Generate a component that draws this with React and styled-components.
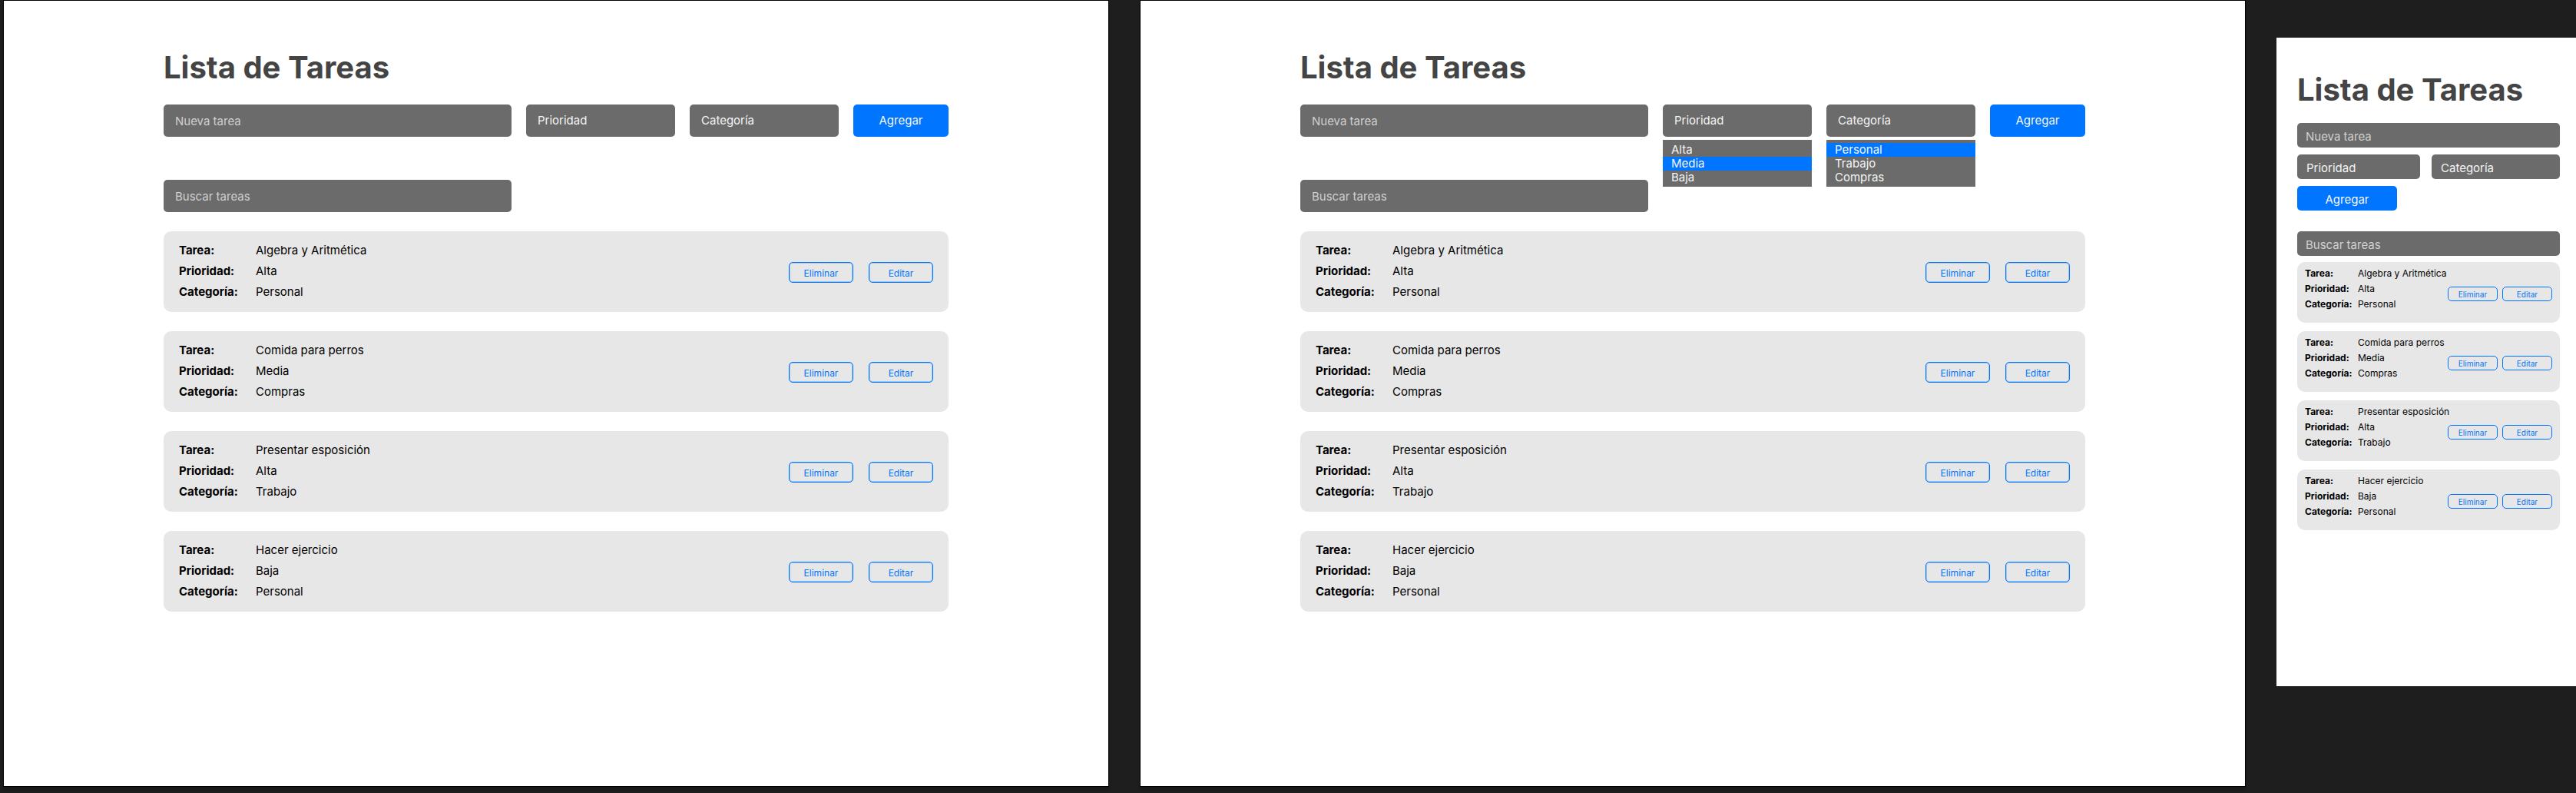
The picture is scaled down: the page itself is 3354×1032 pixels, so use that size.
import React from "react";
import styled, { createGlobalStyle, css } from "styled-components";

const GlobalStyle = createGlobalStyle`
  *, *::before, *::after { box-sizing: border-box; }
  body {
    margin: 0;
    background: #1e1e1e;
    font-family: Inter, "Liberation Sans", sans-serif;
  }
  button, input, select { font: inherit; }
`;

const Board = styled.main`
  display: grid;
  grid-template-columns: minmax(0, 1440fr) minmax(0, 1440fr) minmax(0, 390fr);
  column-gap: 40px;
  align-items: start;
  min-height: 100vh;
  padding-left: 4px;
`;

const Screen = styled.section`
  background: #fff;
  color: #000;
  ${(p) =>
    p.$compact
      ? css`
          min-height: 844px;
          margin-top: 49px;
          padding: 44px 21px 0 27px;
        `
      : css`
          min-height: 1024px;
          border: 1px solid #000;
          padding: 63px 208px 0;
          box-shadow: 0 4px 4px rgba(0, 0, 0, 0.25);
        `}
`;

const Title = styled.h1`
  margin: 0;
  color: #444;
  font-size: 40px;
  font-weight: 700;
  line-height: 48px;
`;

const Form = styled.form`
  display: grid;
  font-size: 15px;
  line-height: 18px;
  ${(p) =>
    p.$compact
      ? css`
          grid-template-columns: minmax(0, 160fr) minmax(0, 167fr);
          gap: 9px 15px;
          margin-top: 19px;
        `
      : css`
          grid-template-columns: minmax(0, 453fr) minmax(0, 194fr) minmax(0, 194fr) 124px;
          gap: 19px;
          margin-top: 24px;
        `}
`;

const field = css`
  display: block;
  width: 100%;
  height: ${(p) => (p.$compact ? 32 : 42)}px;
  margin: 0;
  border: 0;
  border-radius: 5px;
  background: #6b6b6b;
  color: #f5f5f5;
`;

const TextInput = styled.input`
  ${field}
  padding: ${(p) => (p.$compact ? "3px 11px 0" : "0 15px")};
  &::placeholder {
    color: #d0d0d0;
    opacity: 1;
  }
`;

const TaskInput = styled(TextInput)`
  grid-column: ${(p) => (p.$compact ? "1 / -1" : "auto")};
`;

const Select = styled.select`
  ${field}
  appearance: none;
  padding: ${(p) => (p.$compact ? "3px 12px 0" : "0 15px")};
`;

const SelectWrap = styled.div`
  position: relative;
`;

const Menu = styled.ul`
  position: absolute;
  top: 46px;
  left: 0;
  right: 0;
  margin: 0;
  padding: 4px 0 3px;
  list-style: none;
  background: #6b6b6b;
  color: #f5f5f5;
`;

const MenuOption = styled.li`
  padding: 0 11px;
  background: ${(p) => (p.$active ? "#0075ff" : "transparent")};
`;

const AddButton = styled.button`
  height: ${(p) => (p.$compact ? 32 : 42)}px;
  width: ${(p) => (p.$compact ? "130px" : "100%")};
  padding: ${(p) => (p.$compact ? "3px 0 0" : "0")};
  border: 0;
  border-radius: 5px;
  background: #0075ff;
  color: #f5f5f5;
`;

const Search = styled.div`
  width: ${(p) => (p.$compact ? "100%" : "calc((100% - 181px) * 453 / 841)")};
  margin-top: ${(p) => (p.$compact ? 27 : 56)}px;
  font-size: 15px;
  line-height: 18px;
`;

const TaskList = styled.ul`
  display: grid;
  grid-template-columns: minmax(0, 1fr);
  gap: ${(p) => (p.$compact ? 11 : 25)}px;
  margin: ${(p) => (p.$compact ? 8 : 25)}px 0 0;
  padding: 0;
  list-style: none;
`;

const Card = styled.li`
  display: flex;
  align-items: center;
  border-radius: 10px;
  background: #e7e7e7;
  padding: 0 ${(p) => (p.$compact ? 10 : 20)}px;
`;

const Details = styled.dl`
  display: grid;
  flex: 1;
  min-width: 0;
  margin: 0;
  ${(p) =>
    p.$compact
      ? css`
          grid-template-columns: 69px minmax(0, 1fr);
          grid-auto-rows: 20px;
          padding: 5px 0 14px;
          font-size: 12px;
          line-height: 20px;
        `
      : css`
          grid-template-columns: 100px minmax(0, 1fr);
          grid-auto-rows: 27px;
          padding: 11px 0 13px;
          font-size: 15px;
          line-height: 27px;
        `}
`;

const Label = styled.dt`
  font-weight: 700;
`;

const Value = styled.dd`
  margin: 0;
  white-space: nowrap;
`;

const Actions = styled.div`
  display: flex;
  flex: none;
  ${(p) =>
    p.$compact
      ? css`
          gap: 6px;
          padding-top: 4px;
        `
      : css`
          gap: 20px;
          padding-top: 1px;
        `}
`;

const ActionButton = styled.button`
  border: 1px solid #0075ff;
  border-radius: 5px;
  background: transparent;
  color: #0075ff;
  ${(p) =>
    p.$compact
      ? css`
          width: 65px;
          height: 19px;
          padding: 0;
          font-size: 10px;
        `
      : css`
          width: 84px;
          height: 27px;
          padding: 2px 0 0;
          font-size: 12px;
          box-shadow: inset 0 0 0 1px rgba(0, 117, 255, 0.3);
        `}
`;

const PRIORITIES = ["Alta", "Media", "Baja"];
const CATEGORIES = ["Personal", "Trabajo", "Compras"];

const TASKS = [
  { name: "Algebra y Aritmética", priority: "Alta", category: "Personal" },
  { name: "Comida para perros", priority: "Media", category: "Compras" },
  { name: "Presentar esposición", priority: "Alta", category: "Trabajo" },
  { name: "Hacer ejercicio", priority: "Baja", category: "Personal" },
];

function Dropdown({ label, options, active, open, compact }) {
  return (
    <SelectWrap>
      <Select aria-label={label} defaultValue="" $compact={compact}>
        <option value="" disabled hidden>
          {label}
        </option>
        {options.map((o) => (
          <option key={o}>{o}</option>
        ))}
      </Select>
      {open && (
        <Menu role="listbox" aria-label={label}>
          {options.map((o) => (
            <MenuOption key={o} role="option" aria-selected={o === active} $active={o === active}>
              {o}
            </MenuOption>
          ))}
        </Menu>
      )}
    </SelectWrap>
  );
}

function TaskScreen({ compact = false, open = false }) {
  return (
    <Screen $compact={compact}>
      <Title>Lista de Tareas</Title>
      <Form $compact={compact} onSubmit={(e) => e.preventDefault()}>
        <TaskInput $compact={compact} type="text" aria-label="Nueva tarea" placeholder="Nueva tarea" />
        <Dropdown label="Prioridad" options={PRIORITIES} active="Media" open={open} compact={compact} />
        <Dropdown label="Categoría" options={CATEGORIES} active="Personal" open={open} compact={compact} />
        <AddButton $compact={compact} type="submit">Agregar</AddButton>
      </Form>
      <Search $compact={compact}>
        <TextInput $compact={compact} type="text" aria-label="Buscar tareas" placeholder="Buscar tareas" />
      </Search>
      <TaskList $compact={compact}>
        {TASKS.map((t) => (
          <Card key={t.name} $compact={compact}>
            <Details $compact={compact}>
              <Label>Tarea:</Label>
              <Value>{t.name}</Value>
              <Label>Prioridad:</Label>
              <Value>{t.priority}</Value>
              <Label>Categoría:</Label>
              <Value>{t.category}</Value>
            </Details>
            <Actions $compact={compact}>
              <ActionButton $compact={compact} type="button">Eliminar</ActionButton>
              <ActionButton $compact={compact} type="button">Editar</ActionButton>
            </Actions>
          </Card>
        ))}
      </TaskList>
    </Screen>
  );
}

export default function App() {
  return (
    <>
      <GlobalStyle />
      <Board>
        <TaskScreen />
        <TaskScreen open />
        <TaskScreen compact />
      </Board>
    </>
  );
}
